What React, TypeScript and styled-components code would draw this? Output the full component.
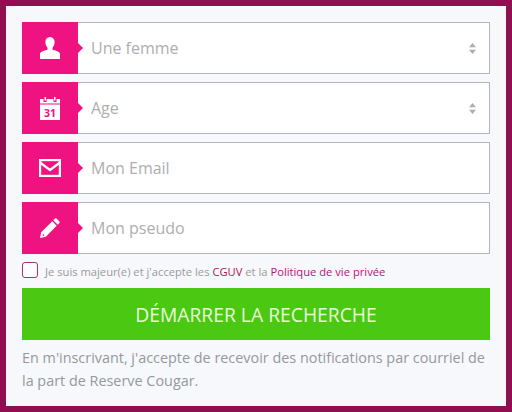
import React from 'react';
import styled, { createGlobalStyle } from 'styled-components';

const GlobalStyle = createGlobalStyle`
  * { box-sizing: border-box; }
  html, body { margin: 0; padding: 0; }
  body { font-family: "Open Sans", "Liberation Sans", sans-serif; }
`;

const Frame = styled.form`
  width: 512px;
  height: 412px;
  border: 6px solid #900f50;
  background: #f7f8fb;
  padding: 16px 16px 0;
  display: flex;
  flex-direction: column;
`;

const Fields = styled.div`
  display: flex;
  flex-direction: column;
  gap: 8px;
`;

const FieldRow = styled.div`
  height: 52px;
  display: flex;
  background: #fff;
  border: 1px solid #b5b5b8;
  border-left: 0;
`;

const IconBox = styled.div`
  position: relative;
  width: 56px;
  margin: -1px 0;
  flex: none;
  background: #ee1380;
  display: flex;
  align-items: center;
  justify-content: center;

  &::after {
    content: "";
    position: absolute;
    right: -5px;
    top: 50%;
    margin-top: -5px;
    border-left: 5px solid #ee1380;
    border-top: 5px solid transparent;
    border-bottom: 5px solid transparent;
  }
`;

const TextInput = styled.input`
  flex: 1;
  min-width: 0;
  border: 0;
  outline: 0;
  background: transparent;
  padding: 0 0 0 13px;
  font: 16px "Open Sans", sans-serif;
  color: #aaa;

  &::placeholder {
    color: #aeaeae;
    opacity: 1;
  }
`;

const SelectInput = styled.select`
  flex: 1;
  min-width: 0;
  border: 0;
  outline: 0;
  appearance: none;
  background: transparent;
  padding: 0 0 0 13px;
  font: 16px "Open Sans", sans-serif;
  color: #aeaeae;
`;

const Sorter = styled.svg`
  flex: none;
  align-self: center;
  margin-right: 13px;
`;

const ConsentRow = styled.label`
  height: 34px;
  display: flex;
  align-items: center;
  padding-bottom: 2px;
  font-size: 11.2px;
  color: #9a9a9a;
`;

const CheckBox = styled.span`
  width: 16px;
  height: 16px;
  flex: none;
  margin-right: 7px;
  background: #fff;
  border: 1px solid #a8306e;
  border-radius: 3px;
`;

const ConsentText = styled.span`
  margin-top: 3px;
`;

const ConsentLink = styled.a`
  color: ${p => p.color};
`;

const SubmitButton = styled.button`
  height: 52px;
  width: 100%;
  flex: none;
  border: 0;
  background: #4bc812;
  color: #e6fbd8;
  font: 19.3px "Open Sans", sans-serif;
  text-transform: uppercase;
`;

const Notice = styled.p`
  margin: 6px 0 0;
  font-size: 14.4px;
  line-height: 23px;
  color: #95989c;
`;

const UserIcon = () => (
  <svg width="20" height="22" viewBox="0 0 20 22" fill="#fff">
    <path d="M10 0c3 0 4.600 2.200 4.600 5 0 2.500-.9 4.400-2.100 5.700v2c1.200.6 7.500 1.400 7.500 4.300v5H0v-5c0-2.900 6.300-3.700 7.500-4.300v-2C6.300 9.400 5.400 7.500 5.400 5 5.400 2.200 7 0 10 0z" />
  </svg>
);

const CalendarIcon = () => (
  <svg width="20" height="23" viewBox="0 0 20 23">
    <path fill="#fff" d="M0 2h3.500v3h3V2h7v3h3V2H20v21H0z" />
    <rect x="4.500" y="0" width="1.500" height="3.500" fill="#fff" />
    <rect x="14" y="0" width="1.500" height="3.500" fill="#fff" />
    <rect x="0" y="6.500" width="20" height="1" fill="#ee1380" />
    <text x="10" y="20" textAnchor="middle" fontFamily="Open Sans, sans-serif" fontSize="10.500" fontWeight="700" fill="#ee1380">31</text>
  </svg>
);

const MailIcon = () => (
  <svg width="22" height="18" viewBox="0 0 22 18" fill="none" stroke="#fff" strokeWidth="2.200">
    <rect x="1.100" y="1.100" width="19.800" height="15.800" />
    <path d="M1 3.500l10 7.500 10-7.500" />
  </svg>
);

const PencilIcon = () => (
  <svg width="20" height="20" viewBox="0 0 20 20" fill="#fff">
    <path d="M0 20l1.200-5.800L12.300 3.300l4.400 4.400L5.800 18.800zM3 15.300l-.5 2.200 2 .4z" fillRule="evenodd" />
    <path d="M13.300 2.300l1.400-1.500c.6-.6 1.500-.6 2 0l2.500 2.500c.6.600.6 1.400 0 2l-1.500 1.400z" />
  </svg>
);

const SortIcon = () => (
  <Sorter width="7" height="11" viewBox="0 0 7 11" fill="#aeaeae">
    <path d="M3.500 0L7 4.300H0zM0 6.700h7L3.500 11z" />
  </Sorter>
);

export default function App() {
  return (
    <>
      <GlobalStyle />
      <Frame>
        <Fields>
          <FieldRow>
            <IconBox><UserIcon /></IconBox>
            <SelectInput defaultValue="f"><option value="f">Une femme</option></SelectInput>
            <SortIcon />
          </FieldRow>
          <FieldRow>
            <IconBox><CalendarIcon /></IconBox>
            <SelectInput defaultValue="a"><option value="a">Age</option></SelectInput>
            <SortIcon />
          </FieldRow>
          <FieldRow>
            <IconBox><MailIcon /></IconBox>
            <TextInput placeholder="Mon Email" />
          </FieldRow>
          <FieldRow>
            <IconBox><PencilIcon /></IconBox>
            <TextInput placeholder="Mon pseudo" />
          </FieldRow>
        </Fields>
        <ConsentRow>
          <CheckBox />
          <ConsentText>
            Je suis majeur(e) et j'accepte les <ConsentLink color="#b5124f">CGUV</ConsentLink> et la <ConsentLink color="#b3127f">Politique de vie privée</ConsentLink>
          </ConsentText>
        </ConsentRow>
        <SubmitButton type="button">Démarrer la recherche</SubmitButton>
        <Notice>En m'inscrivant, j'accepte de recevoir des notifications par courriel de la part de Reserve Cougar.</Notice>
      </Frame>
    </>
  );
}
